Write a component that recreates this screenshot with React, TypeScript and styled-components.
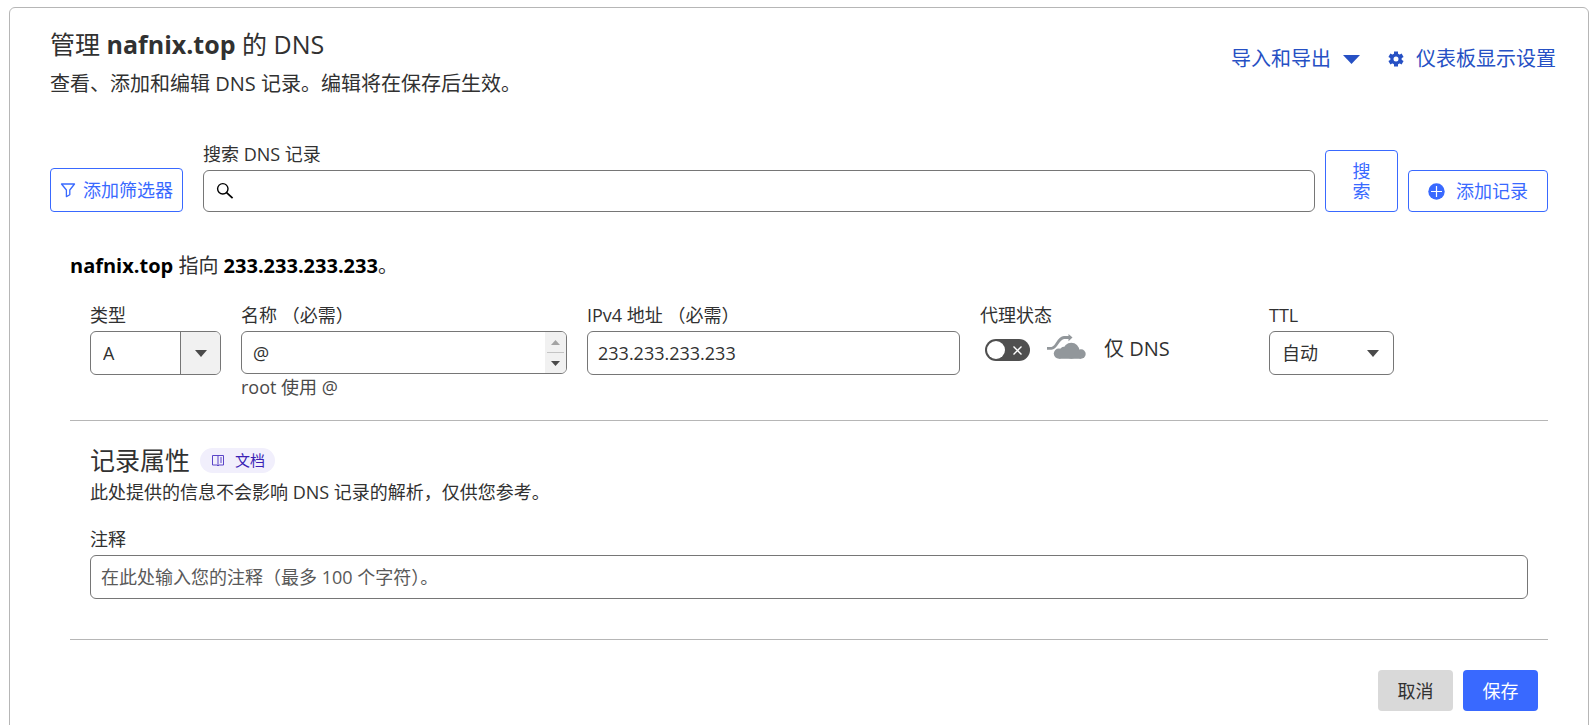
import React from "react";
import styled, { createGlobalStyle, css } from "styled-components";

const color = {
  text: "#313131",
  muted: "#4a4a4a",
  field: "#767676",
  line: "#b6b6b6",
  blue: "#3969ff",
  link: "#2650c4",
};

const GlobalStyle = createGlobalStyle`
  *, *::before, *::after { box-sizing: border-box; }
  body {
    margin: 0;
    background: #fff;
    color: ${color.text};
    font-family: "Open Sans", "Noto Sans CJK SC", sans-serif;
    font-size: 18px;
    line-height: 24px;
  }
  button, input, select, textarea { font: inherit; color: inherit; margin: 0; }
`;

const Card = styled.main`
  margin: 7px 3px 0 9px;
  padding: 18px 40px 48px;
  border: 1px solid ${color.line};
  border-radius: 6px;
`;

const Header = styled.header`
  display: flex;
  justify-content: space-between;
  align-items: flex-start;
  margin-right: -8px;
`;

const Title = styled.h1`
  margin: 0;
  font-size: 25px;
  line-height: 36px;
  font-weight: 400;
`;

const Subtitle = styled.p`
  margin: 6px 0 0;
  font-size: 20px;
  line-height: 32px;
`;

const HeaderActions = styled.div`
  display: flex;
  gap: 28px;
  padding-top: 17px;
`;

const linkLook = css`
  display: inline-flex;
  align-items: center;
  gap: 12px;
  padding: 0;
  border: 0;
  background: none;
  color: ${color.link};
  font-size: 20px;
  line-height: 32px;
  text-decoration: none;
  cursor: pointer;
`;

const MenuButton = styled.button`${linkLook}`;
const SettingsLink = styled.a`${linkLook}`;

const SearchBar = styled.form`
  display: flex;
  align-items: flex-end;
  gap: 10px;
  margin-top: 42px;
`;

const OutlineButton = styled.button<{ $pad: number; $gap?: number }>`
  display: inline-flex;
  align-items: center;
  justify-content: center;
  gap: ${(p) => p.$gap ?? 0}px;
  min-height: 42px;
  padding: 0 ${(p) => p.$pad}px;
  border: 1px solid ${color.blue};
  border-radius: 4px;
  background: #fff;
  color: ${color.blue};
  line-height: 20px;
  white-space: nowrap;
  cursor: pointer;
`;

const FilterButton = styled(OutlineButton)`
  height: 44px;
  margin-right: 10px;
`;

const SearchButton = styled(OutlineButton)`
  width: 73px;
  height: 62px;
  white-space: normal;
`;

const Field = styled.div<{ $grow?: boolean }>`
  display: flex;
  flex-direction: column;
  flex: ${(p) => (p.$grow ? "1" : "none")};
  min-width: 0;
`;

const Label = styled.label`
  line-height: 24px;
  margin-bottom: 4px;
  white-space: nowrap;
`;

const boxLook = css`
  width: 100%;
  height: 44px;
  border: 1px solid ${color.field};
  border-radius: 6px;
  background: #fff;
`;

const TextInput = styled.input`
  ${boxLook}
  padding: 0 10px;
  &::placeholder { color: #595959; opacity: 1; }
`;

const SearchBox = styled.div`
  ${boxLook}
  display: flex;
  align-items: center;
  height: 42px;
  padding: 0 12px;
  gap: 8px;
`;

const SearchInput = styled.input`
  flex: 1;
  min-width: 0;
  border: 0;
  outline: 0;
  background: none;
`;

const Record = styled.section`
  margin: 38px 0 0 20px;
`;

const Summary = styled.p`
  margin: 0;
  font-size: 20px;
  line-height: 32px;
  strong { color: #000; }
`;

const FieldGrid = styled.div`
  display: grid;
  grid-template-columns: 131px 326fr 373fr 269fr 259fr;
  column-gap: 20px;
  padding: 21px 20px 0;
`;

const SelectBox = styled.div<{ $width: number }>`
  ${boxLook}
  display: grid;
  grid-template-columns: 1fr 40px;
  width: ${(p) => p.$width}px;
  overflow: hidden;
  & > * { grid-row: 1; }
`;

const Select = styled.select`
  grid-column: 1 / 3;
  width: 100%;
  padding: 0 40px 0 12px;
  border: 0;
  background: none;
  appearance: none;
  outline: 0;
`;

const SelectArrow = styled.span<{ $split?: boolean }>`
  grid-column: 2;
  display: flex;
  align-items: center;
  justify-content: center;
  pointer-events: none;
  ${(p) => p.$split && css`
    border-left: 1px solid ${color.field};
    background: #f1f1f1;
  `}
`;

const NameBox = styled.div`
  ${boxLook}
  display: flex;
  height: 43px;
  overflow: hidden;
`;

const NameArea = styled.textarea`
  flex: 1;
  min-width: 0;
  height: 100%;
  padding: 9px 11px;
  border: 0;
  outline: 0;
  resize: none;
  overflow: hidden;
  background: none;
`;

const Spinner = styled.span`
  display: flex;
  flex-direction: column;
  width: 21px;
  padding: 0 2px;
  background: #f1f1f1;
  span {
    flex: 1;
    display: flex;
    align-items: center;
    justify-content: center;
  }
  span + span { border-top: 1px solid #c4c4c4; }
`;

const Hint = styled.p`
  margin: 1px 0 0;
  color: ${color.muted};
`;

const ProxyRow = styled.div`
  display: flex;
  align-items: center;
  height: 36px;
  padding-left: 5px;
  font-size: 20px;
`;

const Toggle = styled.label`
  display: grid;
  grid-template-columns: 22px 23px;
  align-items: center;
  width: 45px;
  height: 22px;
  margin-top: 2px;
  border-radius: 11px;
  background: #4f4f4f;
  & > * { grid-row: 1; }
  svg { grid-column: 2; margin-left: 5px; }
`;

const ToggleInput = styled.input`
  grid-column: 1;
  appearance: none;
  width: 18px;
  height: 18px;
  margin: 0 0 0 2px;
  border-radius: 50%;
  background: #fff;
  cursor: pointer;
`;

const CloudIcon = styled.svg`
  margin: -6px 18px 0 17px;
`;

const Divider = styled.hr<{ $space: number }>`
  margin: ${(p) => p.$space}px 0 0;
  border: 0;
  border-top: 1px solid ${color.line};
`;

const Attributes = styled.section`
  padding: 21px 20px 0;
`;

const SectionHead = styled.div`
  display: flex;
  align-items: center;
  gap: 10px;
`;

const SectionTitle = styled.h2`
  margin: 0;
  font-size: 25px;
  line-height: 36px;
  font-weight: 400;
`;

const DocsLink = styled.a`
  display: inline-flex;
  align-items: center;
  gap: 10px;
  height: 25px;
  padding: 0 10px 0 11px;
  border-radius: 13px;
  background: #f1effc;
  color: #3a1fb5;
  font-size: 15px;
  text-decoration: none;
`;

const Note = styled.p`
  margin: 2px 0 23px;
`;

const Footer = styled.footer`
  display: flex;
  justify-content: flex-end;
  gap: 10px;
  padding: 30px 10px 0;
`;

const SolidButton = styled.button<{ $primary?: boolean }>`
  width: 75px;
  height: 41px;
  padding: 0;
  border: 0;
  border-radius: 4px;
  background: ${(p) => (p.$primary ? color.blue : "#d9d9d9")};
  color: ${(p) => (p.$primary ? "#fff" : color.text)};
  cursor: pointer;
`;

const Caret = ({ w = 12, h = 7, up = false, fill = "#4a4a4a" }) => (
  <svg width={w} height={h} viewBox="0 0 12 7" preserveAspectRatio="none" aria-hidden="true">
    <path d={up ? "M0 7h12L6 0z" : "M0 0h12L6 7z"} fill={fill} />
  </svg>
);

export default function App() {
  return (
    <>
      <GlobalStyle />
      <Card>
        <Header>
          <div>
            <Title>
              管理 <strong>nafnix.top</strong> 的 DNS
            </Title>
            <Subtitle>查看、添加和编辑 DNS 记录。编辑将在保存后生效。</Subtitle>
          </div>
          <HeaderActions>
            <MenuButton type="button">
              导入和导出
              <Caret w={17} h={9} fill={color.link} />
            </MenuButton>
            <SettingsLink href="#settings">
              <svg width="16" height="16" viewBox="0 0 16 16" aria-hidden="true">
                <g fill="none" stroke={color.link}>
                  <circle cx="8" cy="8" r="4.1" strokeWidth="3.2" />
                  <path
                    d="M8 .4v3M8 12.600v3M1.420 4.200l2.600 1.500M11.980 10.300l2.600 1.500M1.420 11.800l2.600-1.500M11.980 5.700l2.600-1.500"
                    strokeWidth="4"
                  />
                </g>
              </svg>
              仪表板显示设置
            </SettingsLink>
          </HeaderActions>
        </Header>

        <SearchBar onSubmit={(e) => e.preventDefault()}>
          <FilterButton type="button" $pad={9} $gap={7}>
            <svg width="16" height="16" viewBox="0 0 16 16" fill="none" aria-hidden="true">
              <path d="M1.500 2h13L9.800 8v4.800L6.400 14.600V8z" stroke={color.blue} strokeWidth="1.300" strokeLinejoin="round" />
            </svg>
            添加筛选器
          </FilterButton>
          <Field $grow>
            <Label htmlFor="search">搜索 DNS 记录</Label>
            <SearchBox>
              <svg width="18" height="18" viewBox="0 0 18 18" fill="none" stroke="#000" aria-hidden="true">
                <circle cx="6.8" cy="6.8" r="5.2" strokeWidth="1.4" />
                <path d="M10.6 10.6l6 5.6" strokeWidth="1.700" />
              </svg>
              <SearchInput id="search" type="text" />
            </SearchBox>
          </Field>
          <SearchButton type="submit" $pad={26}>搜索</SearchButton>
          <OutlineButton type="button" $pad={19} $gap={11}>
            <svg width="17" height="17" viewBox="0 0 17 17" aria-hidden="true">
              <circle cx="8.5" cy="8.5" r="8.2" fill={color.blue} />
              <path d="M8.5 3v11M3 8.5h11" stroke="#fff" strokeWidth="1.2" />
            </svg>
            添加记录
          </OutlineButton>
        </SearchBar>

        <Record>
          <Summary>
            <strong>nafnix.top</strong> 指向 <strong>233.233.233.233</strong>。
          </Summary>
          <FieldGrid>
            <Field>
              <Label htmlFor="type">类型</Label>
              <SelectBox $width={131}>
                <Select id="type" defaultValue="A">
                  <option>A</option>
                </Select>
                <SelectArrow $split><Caret /></SelectArrow>
              </SelectBox>
            </Field>
            <Field>
              <Label htmlFor="name">名称 （必需）</Label>
              <NameBox>
                <NameArea id="name" rows={1} defaultValue="@" />
                <Spinner aria-hidden="true">
                  <span><Caret w={9} h={5} up fill="#a3a3a3" /></span>
                  <span><Caret w={9} h={5} /></span>
                </Spinner>
              </NameBox>
              <Hint>root 使用 @</Hint>
            </Field>
            <Field>
              <Label htmlFor="ipv4">IPv4 地址 （必需）</Label>
              <TextInput id="ipv4" type="text" defaultValue="233.233.233.233" />
            </Field>
            <Field>
              <Label htmlFor="proxy">代理状态</Label>
              <ProxyRow>
                <Toggle>
                  <ToggleInput id="proxy" type="checkbox" />
                  <svg width="11" height="11" viewBox="0 0 11 11" aria-hidden="true">
                    <path d="M1.5 1.5l8 8M9.5 1.5l-8 8" stroke="#fff" strokeWidth="1.4" />
                  </svg>
                </Toggle>
                <CloudIcon width="39" height="25" viewBox="0 0 39 25" fill="#92979b" aria-hidden="true">
                  <circle cx="11.900" cy="19.600" r="5.100" />
                  <circle cx="17" cy="17" r="4.200" />
                  <circle cx="24.300" cy="16.700" r="8" />
                  <circle cx="34" cy="20" r="4.700" />
                  <path d="M12 17h19l3 2v5.700H12z" />
                  <path d="M0 14.300h4.500C10 14.300 10.500 4 17 3.500h5" fill="none" stroke="#92979b" strokeWidth="2.800" />
                  <path d="M21.500 0l4 3.500-4 3.700z" />
                </CloudIcon>
                仅 DNS
              </ProxyRow>
            </Field>
            <Field>
              <Label htmlFor="ttl">TTL</Label>
              <SelectBox $width={125}>
                <Select id="ttl" defaultValue="自动">
                  <option>自动</option>
                </Select>
                <SelectArrow><Caret /></SelectArrow>
              </SelectBox>
            </Field>
          </FieldGrid>

          <Divider $space={21} />

          <Attributes>
            <SectionHead>
              <SectionTitle>记录属性</SectionTitle>
              <DocsLink href="#docs">
                <svg width="14" height="13" viewBox="0 0 14 13" fill="none" stroke="#5a45c8" aria-hidden="true">
                  <path d="M7 1.5H1.500v9.500H6l1 1 1-1h4.500V1.500zM7 1.5V12" />
                  <path d="M9 4h2M9 6h2M9 8h2" />
                </svg>
                文档
              </DocsLink>
            </SectionHead>
            <Note>此处提供的信息不会影响 DNS 记录的解析，仅供您参考。</Note>
            <Field>
              <Label htmlFor="comment">注释</Label>
              <TextInput id="comment" type="text" placeholder="在此处输入您的注释（最多 100 个字符）。" />
            </Field>
          </Attributes>

          <Divider $space={40} />
          <Footer>
            <SolidButton type="button">取消</SolidButton>
            <SolidButton type="submit" $primary>保存</SolidButton>
          </Footer>
        </Record>
      </Card>
    </>
  );
}
